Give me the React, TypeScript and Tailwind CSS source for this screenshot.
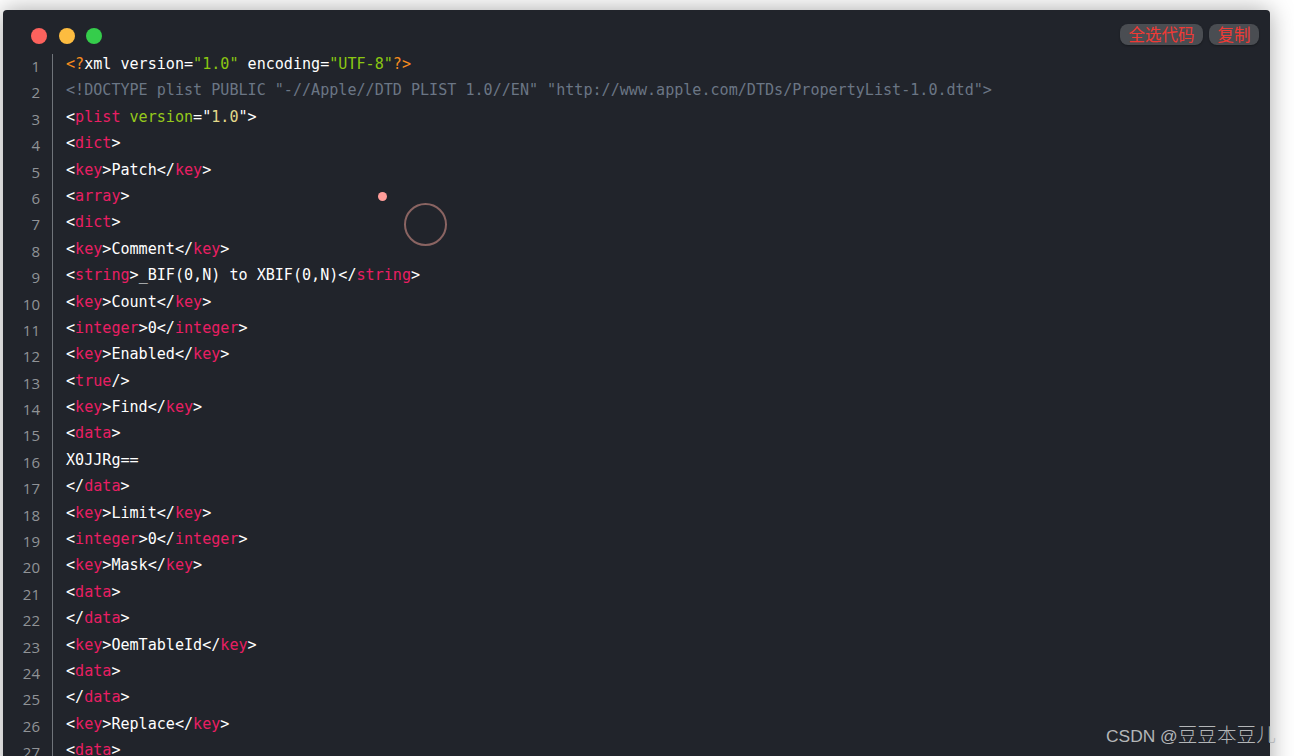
type Tok = [string, string?];

const W = 'text-white';
const P = 'text-[#e91e63]';

// plain <tag> line
const open = (name: string): Tok[] => [['<'], [name, P], ['>']];
const close = (name: string): Tok[] => [['</'], [name, P], ['>']];
const wrap = (name: string, text: string): Tok[] => [...open(name), [text], ...close(name)];

const lines: Tok[][] = [
  [
    ['<?', 'text-[#f78c1e]'],
    ['xml version='],
    ['"1.0"', 'text-[#8bc712]'],
    [' encoding='],
    ['"UTF-8"', 'text-[#8bc712]'],
    ['?>', 'text-[#f78c1e]'],
  ],
  [['<!DOCTYPE plist PUBLIC "-//Apple//DTD PLIST 1.0//EN" "http://www.apple.com/DTDs/PropertyList-1.0.dtd">', 'text-[#6b7685]']],
  [['<'], ['plist', P], [' '], ['version', 'text-[#95c91c]'], ['="'], ['1.0', 'text-[#e3d98a]'], ['">']],
  open('dict'),
  wrap('key', 'Patch'),
  open('array'),
  open('dict'),
  wrap('key', 'Comment'),
  wrap('string', '_BIF(0,N) to XBIF(0,N)'),
  wrap('key', 'Count'),
  wrap('integer', '0'),
  wrap('key', 'Enabled'),
  [['<'], ['true', P], ['/>']],
  wrap('key', 'Find'),
  open('data'),
  [['X0JJRg==']],
  close('data'),
  wrap('key', 'Limit'),
  wrap('integer', '0'),
  wrap('key', 'Mask'),
  open('data'),
  close('data'),
  wrap('key', 'OemTableId'),
  open('data'),
  close('data'),
  wrap('key', 'Replace'),
  open('data'),
];

function CodeLine({ tokens }: { tokens: Tok[] }) {
  return (
    <div className="h-[26.4px] leading-[26.4px] whitespace-pre">
      {tokens.map((t, i) => (
        <span key={i} className={t[1] ?? W}>{t[0]}</span>
      ))}
    </div>
  );
}

export default function App() {
  return (
    <div className="relative h-[756px] w-[1294px] overflow-hidden bg-white pl-[3px] pt-[10px] font-['DejaVu_Sans_Mono',monospace]">
      <div className="relative h-[800px] w-[1267px] rounded-[4px] bg-[#21242b] shadow-[0_0_24px_rgba(0,0,0,0.35)]">
        {/* window dots */}
        <div className="flex gap-[11.5px] pl-[28px] pt-[18px]">
          <span className="h-4 w-4 rounded-full bg-[#fc625d]" />
          <span className="h-4 w-4 rounded-full bg-[#fdbc40]" />
          <span className="h-4 w-4 rounded-full bg-[#35cd4b]" />
        </div>

        {/* copy buttons */}
        <div className="absolute right-[11px] top-[14px] flex gap-[6px] font-['Noto_Sans_CJK_SC',sans-serif] text-[16.5px] leading-[21px] text-[#f03a35]">
          <button className="h-[21px] w-[83px] rounded-[8px] bg-[#4a4d52] text-center shadow-[0_1px_2px_rgba(0,0,0,0.3)]">全选代码</button>
          <button className="h-[21px] w-[50px] rounded-[8px] bg-[#4a4d52] text-center shadow-[0_1px_2px_rgba(0,0,0,0.3)]">复制</button>
        </div>

        <div className="mt-[10px] flex">
          {/* gutter */}
          <div className="w-[50px] border-r border-[#70747a] pr-[12px] text-right font-['Open_Sans',sans-serif] text-[15px] text-[#909397]">
            {lines.map((_, i) => (
              <div key={i} className="h-[26.4px] leading-[25.4px]">{i + 1}</div>
            ))}
          </div>
          <div className="-mt-[3px] pl-[13px] text-[15.08px]">
            {lines.map((tokens, i) => (
              <CodeLine key={i} tokens={tokens} />
            ))}
          </div>
        </div>
      </div>

      {/* mouse highlight */}
      <span className="absolute left-[378px] top-[192px] h-[8.5px] w-[8.5px] rounded-full bg-[#ff9d9a]" />
      <span className="absolute left-[404px] top-[203px] h-[43px] w-[43px] rounded-full border-2 border-[#8a6462]" />

      {/* watermark */}
      <span className="absolute left-[1106px] top-[722px] font-['Liberation_Sans',sans-serif] text-[17.4px] leading-[24px] whitespace-nowrap text-[#b4b6b8]">
        CSDN @<span className="font-['Noto_Sans_CJK_SC',sans-serif] text-[19.6px] font-light">豆豆本豆儿</span>
      </span>
    </div>
  );
}
